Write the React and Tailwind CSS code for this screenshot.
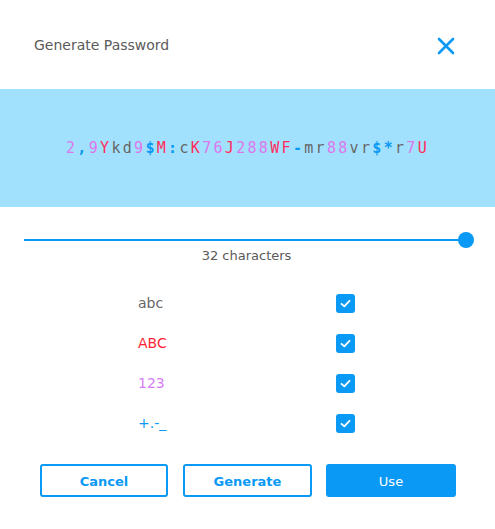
import React from "react";

const B = "text-[#0a99f5]";
const R = "text-[#ff2d5a]";
const P = "text-[#dd77ee]";
const G = "text-[#666666]";

const pw = [
  ["2", P], [",", B], ["9", P], ["Y", R], ["k", G], ["d", G], ["9", P], ["$", B],
  ["M", R], [":", B], ["c", G], ["K", R], ["7", P], ["6", P], ["J", R], ["2", P],
  ["8", P], ["8", P], ["W", R], ["F", R], ["-", B], ["m", G], ["r", G], ["8", P],
  ["8", P], ["v", G], ["r", G], ["$", B], ["*", B], ["r", G], ["7", P], ["U", R],
];

function Check() {
  return (
    <div className="w-[19px] h-[19px] rounded-[3px] bg-[#0a99f5] flex items-center justify-center">
      <svg width="13" height="13" viewBox="0 0 13 13" fill="none">
        <path d="M2.5 6.8 L5.3 9.4 L10.5 3.8" stroke="white" strokeWidth="1.8" strokeLinecap="round" strokeLinejoin="round" />
      </svg>
    </div>
  );
}

export default function App() {
  const rows = [
    ["abc", "text-[#666666]"],
    ["ABC", "text-[#ff1f33]"],
    ["123", "text-[#d77cf7]"],
    ["+.-_", "text-[#0a99f5]"],
  ];
  return (
    <div className="w-[495px] h-[529px] bg-white flex flex-col" style={{ fontFamily: '"DejaVu Sans", Verdana, sans-serif' }}>
      <div className="h-[89px] flex items-center justify-between pl-[34px] pr-[40px] pt-[2px]">
        <span className="text-[14px] text-[#5a5a5a]">Generate Password</span>
        <svg width="18" height="18" viewBox="0 0 18 18" fill="none">
          <path d="M2 2 L16 16 M16 2 L2 16" stroke="#0a99f5" strokeWidth="2.6" strokeLinecap="round" />
        </svg>
      </div>
      <div className="h-[118px] bg-[#a2e1fd] flex items-center justify-center">
        <div className="text-[15px] tracking-[2.3px] font-medium" style={{ fontFamily: '"DejaVu Sans Mono", monospace' }}>
          {pw.map(([c, cls], i) => (
            <span key={i} className={cls + (cls === B ? " font-bold" : "")}>{c}</span>
          ))}
        </div>
      </div>
      <div className="pt-[25px] pl-[24px] pr-[29px]">
        <div className="relative h-[16px] flex items-center">
          <div className="h-[2px] w-full bg-[#0a99f5]" />
          <div className="absolute right-[-8px] top-0 w-[16px] h-[16px] rounded-full bg-[#0a99f5]" />
        </div>
      </div>
      <div className="text-center text-[13px] text-[#5a5a5a] mt-[0px] leading-[16px] pr-[2px]">32 characters</div>
      <div className="mt-[30px] flex flex-col gap-[21px] pl-[138px]">
        {rows.map(([l, c]) => (
          <div key={l} className="flex items-center h-[19px]">
            <span className={"w-[198px] text-[14px] " + c}>{l}</span>
            <Check />
          </div>
        ))}
      </div>
      <div className="mt-[31px] flex gap-[15px] pl-[40px]">
        <button className="w-[128px] h-[33px] border-2 border-[#0a99f5] rounded-[3px] text-[13px] font-bold text-[#0a99f5] pt-[2px]">Cancel</button>
        <button className="w-[129px] h-[33px] border-2 border-[#0a99f5] rounded-[3px] text-[13px] font-bold text-[#0a99f5] pt-[2px]">Generate</button>
        <button className="w-[130px] h-[33px] bg-[#0a99f5] rounded-[3px] text-[13px] text-white ml-[-1px] pt-[2px]">Use</button>
      </div>
    </div>
  );
}
